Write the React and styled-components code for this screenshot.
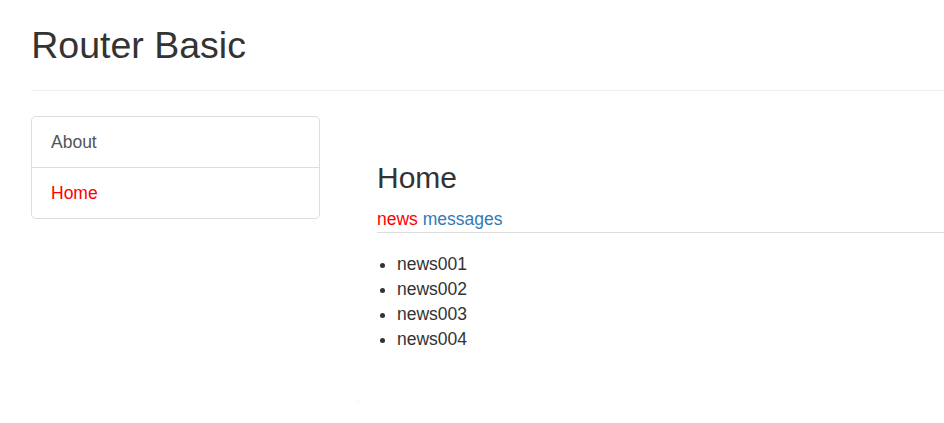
import React from 'react'
import styled, { createGlobalStyle } from 'styled-components'

const Global = createGlobalStyle`
html, body {
  margin:0;
  overflow:hidden;
  background:#fff;
  font-family:"Liberation Sans", Arial, sans-serif;
  font-size:17.5px;
  line-height:1.42857;
  color:#333;
}
`

const items = ['news001', 'news002', 'news003', 'news004']

const App = () => {
  return (
    <>
      <Global />
      <Page>
        <Header>
          <Title>Router Basic</Title>
        </Header>
        <Row>
          <ListGroup>
            <ListItem href='#about'>About</ListItem>
            <ListItem href='#home' active>Home</ListItem>
          </ListGroup>
          <Panel>
            <SubTitle>Home</SubTitle>
            <Tabs>
              <Tab href='#news' active>news</Tab>{' '}
              <Tab href='#messages'>messages</Tab>
            </Tabs>
            <News>
              {items.map(n => <li key={n}>{n}</li>)}
            </News>
          </Panel>
        </Row>
      </Page>
    </>
  )
}

const Page = styled.div`
width:1300px;
padding:25px 0 0 31.25px;
box-sizing:border-box;
`

const Header = styled.div`
padding-bottom:11.25px;
border-bottom:1px solid #eee;
margin-bottom:25px;
`

const Title = styled.h2`
margin:0 0 12.5px;
font-size:37.5px;
line-height:1.1;
font-weight:500;
color:#333;
`

const Row = styled.div`
display:grid;
grid-template-columns:288.5px 1fr;
column-gap:37.5px;
align-items:start;
`

const ListGroup = styled.div`
display:flex;
flex-direction:column;
border:1px solid #ddd;
border-radius:5px;
`

const ListItem = styled.a`
display:block;
padding:12.5px 18.75px;
line-height:25px;
text-decoration:none;
color:${p => (p.active ? '#f00' : '#555')};
& + & {
  border-top:1px solid #ddd;
}
`

const Panel = styled.div`
border:1px solid transparent;
border-radius:5px;
box-shadow:0 1px 1.5px rgba(0,0,0,.06);
padding:18.75px 18.75px 19px;
`

const SubTitle = styled.h3`
margin:25.5px 0 12.5px;
font-size:30px;
line-height:1.1;
font-weight:500;
color:#333;
`

const Tabs = styled.div`
border-bottom:1px solid #ddd;
line-height:25px;
`

const Tab = styled.a`
text-decoration:none;
color:${p => (p.active ? '#f00' : '#337ab7')};
`

const News = styled.ul`
margin:19px 0 31px;
padding-left:20px;
li{
  line-height:25px;
}
`

export default App
